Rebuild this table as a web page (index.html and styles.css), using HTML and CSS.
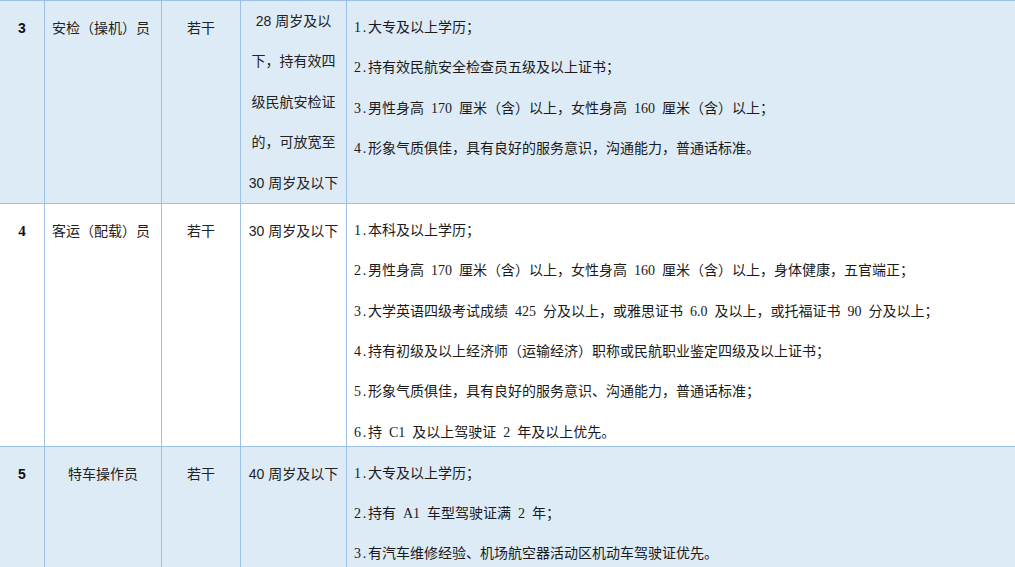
FILE: index.html
```html
<!DOCTYPE html>
<html lang="zh-CN">
<head>
<meta charset="utf-8">
<title>岗位招聘条件</title>
<link rel="stylesheet" href="styles.css">
</head>
<body>
<div class="sheet">
  <div class="row row-blue">
    <div class="cell c-no"><p class="no sans">3</p></div>
    <div class="cell c-post left"><p>安检（操机）员</p></div>
    <div class="cell c-num"><p>若干</p></div>
    <div class="cell c-age tall"><p>28 周岁及以<br>下，持有效四<br>级民航安检证<br>的，可放宽至<br>30 周岁及以下</p></div>
    <div class="cell c-req">
      <p><span class="idx">1.</span>大专及以上学历；</p>
      <p><span class="idx">2.</span>持有效民航安全检查员五级及以上证书；</p>
      <p><span class="idx">3.</span>男性身高 170 厘米（含）以上，女性身高 160 厘米（含）以上；</p>
      <p><span class="idx">4.</span>形象气质俱佳，具有良好的服务意识，沟通能力，普通话标准。</p>
    </div>
  </div>
  <div class="row row-white">
    <div class="cell c-no"><p class="no serif">4</p></div>
    <div class="cell c-post left"><p>客运（配载）员</p></div>
    <div class="cell c-num"><p>若干</p></div>
    <div class="cell c-age"><p>30 周岁及以下</p></div>
    <div class="cell c-req">
      <p><span class="idx">1.</span>本科及以上学历；</p>
      <p><span class="idx">2.</span>男性身高 170 厘米（含）以上，女性身高 160 厘米（含）以上，身体健康，五官端正；</p>
      <p><span class="idx">3.</span>大学英语四级考试成绩 425 分及以上，或雅思证书 6.0 及以上，或托福证书 90 分及以上；</p>
      <p><span class="idx">4.</span>持有初级及以上经济师（运输经济）职称或民航职业鉴定四级及以上证书；</p>
      <p><span class="idx">5.</span>形象气质俱佳，具有良好的服务意识、沟通能力，普通话标准；</p>
      <p><span class="idx">6.</span>持 C1 及以上驾驶证 2 年及以上优先。</p>
    </div>
  </div>
  <div class="row row-blue last">
    <div class="cell c-no"><p class="no sans">5</p></div>
    <div class="cell c-post"><p>特车操作员</p></div>
    <div class="cell c-num"><p>若干</p></div>
    <div class="cell c-age"><p>40 周岁及以下</p></div>
    <div class="cell c-req">
      <p><span class="idx">1.</span>大专及以上学历；</p>
      <p><span class="idx">2.</span>持有 A1 车型驾驶证满 2 年；</p>
      <p><span class="idx">3.</span>有汽车维修经验、机场航空器活动区机动车驾驶证优先。</p>
    </div>
  </div>
</div>
</body>
</html>
```

FILE: styles.css
```css
html, body {
  margin: 0;
  padding: 0;
  background: #ffffff;
}
body {
  width: 1015px;
  height: 567px;
  overflow: hidden;
  font-family: "Liberation Sans", "Noto Sans CJK SC", sans-serif;
  font-size: 14px;
  color: #222222;
}
.sheet {
  width: 1040px;
  border-top: 1px solid #9bc2e6;
}
.row {
  display: grid;
  grid-template-columns: 45px 117px 79px 106px 1fr;
  border-bottom: 1px solid #9bc2e6;
}
.row-blue { background: #ddebf7; }
.row-white { background: #ffffff; }
.row.last { border-bottom: none; }
.cell {
  box-sizing: border-box;
  border-right: 1px solid #9bc2e6;
  text-align: center;
  padding: 0 5px;
}
.cell p {
  margin: 0;
  padding-top: 14px;
  line-height: 26.3px;
  white-space: nowrap;
}
.c-no { padding: 0; }
.no {
  font-weight: bold;
  color: #111111;
}
.no.sans { font-family: "Liberation Sans", sans-serif; }
.no.serif { font-family: "Liberation Serif", serif; font-size: 15px; }
.c-post.left { text-align: left; padding-left: 7px; }
.c-age.tall p {
  padding-top: 0;
  line-height: 40.4px;
}
.c-req {
  text-align: left;
  padding-left: 7px;
  font-family: "Liberation Serif", "Noto Sans CJK SC", serif;
  color: #1a1a1a;
  word-spacing: 3.5px;
}
.idx {
  letter-spacing: 1.75px;
}
```
